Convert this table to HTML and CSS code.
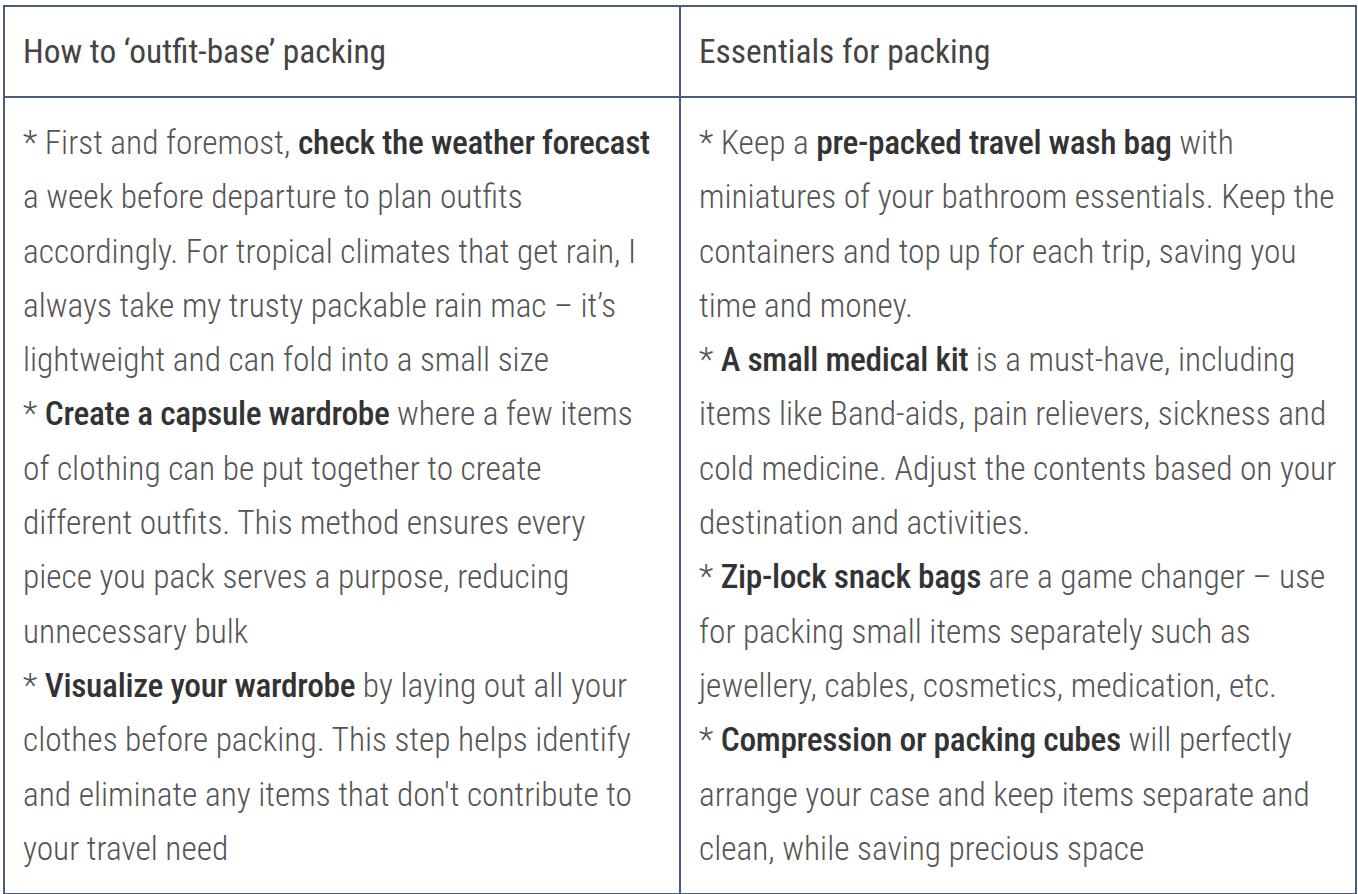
FILE: index.html
```html
<!DOCTYPE html>
<html lang="en">
<head>
<meta charset="utf-8">
<title>Packing tips</title>
<link rel="stylesheet" href="styles.css">
</head>
<body>
<table class="tips">
  <thead>
    <tr>
      <th class="tips__head">How to ‘outfit-base’ packing</th>
      <th class="tips__head">Essentials for packing</th>
    </tr>
  </thead>
  <tbody>
    <tr>
      <td class="tips__cell tips__cell--first">* First and foremost, <strong>check the weather forecast</strong> a week before departure to plan outfits accordingly. For tropical climates that get rain, I always take my trusty packable rain mac – it’s lightweight and can fold into a small size<br>* <strong>Create a capsule wardrobe</strong> where a few items of clothing can be put together to create different outfits. This method ensures every piece you pack serves a purpose, reducing unnecessary bulk<br>* <strong>Visualize your wardrobe</strong> by laying out all your clothes before packing. This step helps identify and eliminate any items that don't contribute to your travel need</td>
      <td class="tips__cell">* Keep a <strong>pre-packed travel wash bag</strong> with miniatures of your bathroom essentials. Keep the containers and top up for each trip, saving you time and money.<br>* <strong>A small medical kit</strong> is a must-have, including items like Band-aids, pain relievers, sickness and cold medicine. Adjust the contents based on your destination and activities.<br>* <strong>Zip-lock snack bags</strong> are a game changer – use for packing small items separately such as jewellery, cables, cosmetics, medication, etc.<br>* <strong>Compression or packing cubes</strong> will perfectly arrange your case and keep items separate and clean, while saving precious space</td>
    </tr>
  </tbody>
</table>
</body>
</html>
```

FILE: styles.css
```css
html, body {
  background: #ffffff;
}
body {
  margin: 5px 0 0 3px;
  font-family: "Roboto Condensed", "Liberation Sans Narrow", "DejaVu Sans Condensed", Roboto, sans-serif;
  font-stretch: condensed;
  color: #555555;
}
.tips {
  width: 1354px;
  border-collapse: collapse;
  table-layout: fixed;
  border: 2px solid #475d7b;
}
.tips__head,
.tips__cell {
  border: 2px solid #475d7b;
  text-align: left;
  vertical-align: top;
  padding: 0 18px;
}
.tips__head {
  height: 89px;
  vertical-align: middle;
  font-weight: 400;
  font-size: 33.4px;
  color: #444444;
}
.tips__cell {
  padding-top: 18px;
  padding-bottom: 17px;
  font-size: 33.4px;
  font-weight: 300;
  line-height: 54.3px;
}
.tips__cell--first {
  padding-right: 26px;
}
.tips__cell strong {
  font-weight: 500;
  letter-spacing: -0.3px;
  color: #333333;
}
```
